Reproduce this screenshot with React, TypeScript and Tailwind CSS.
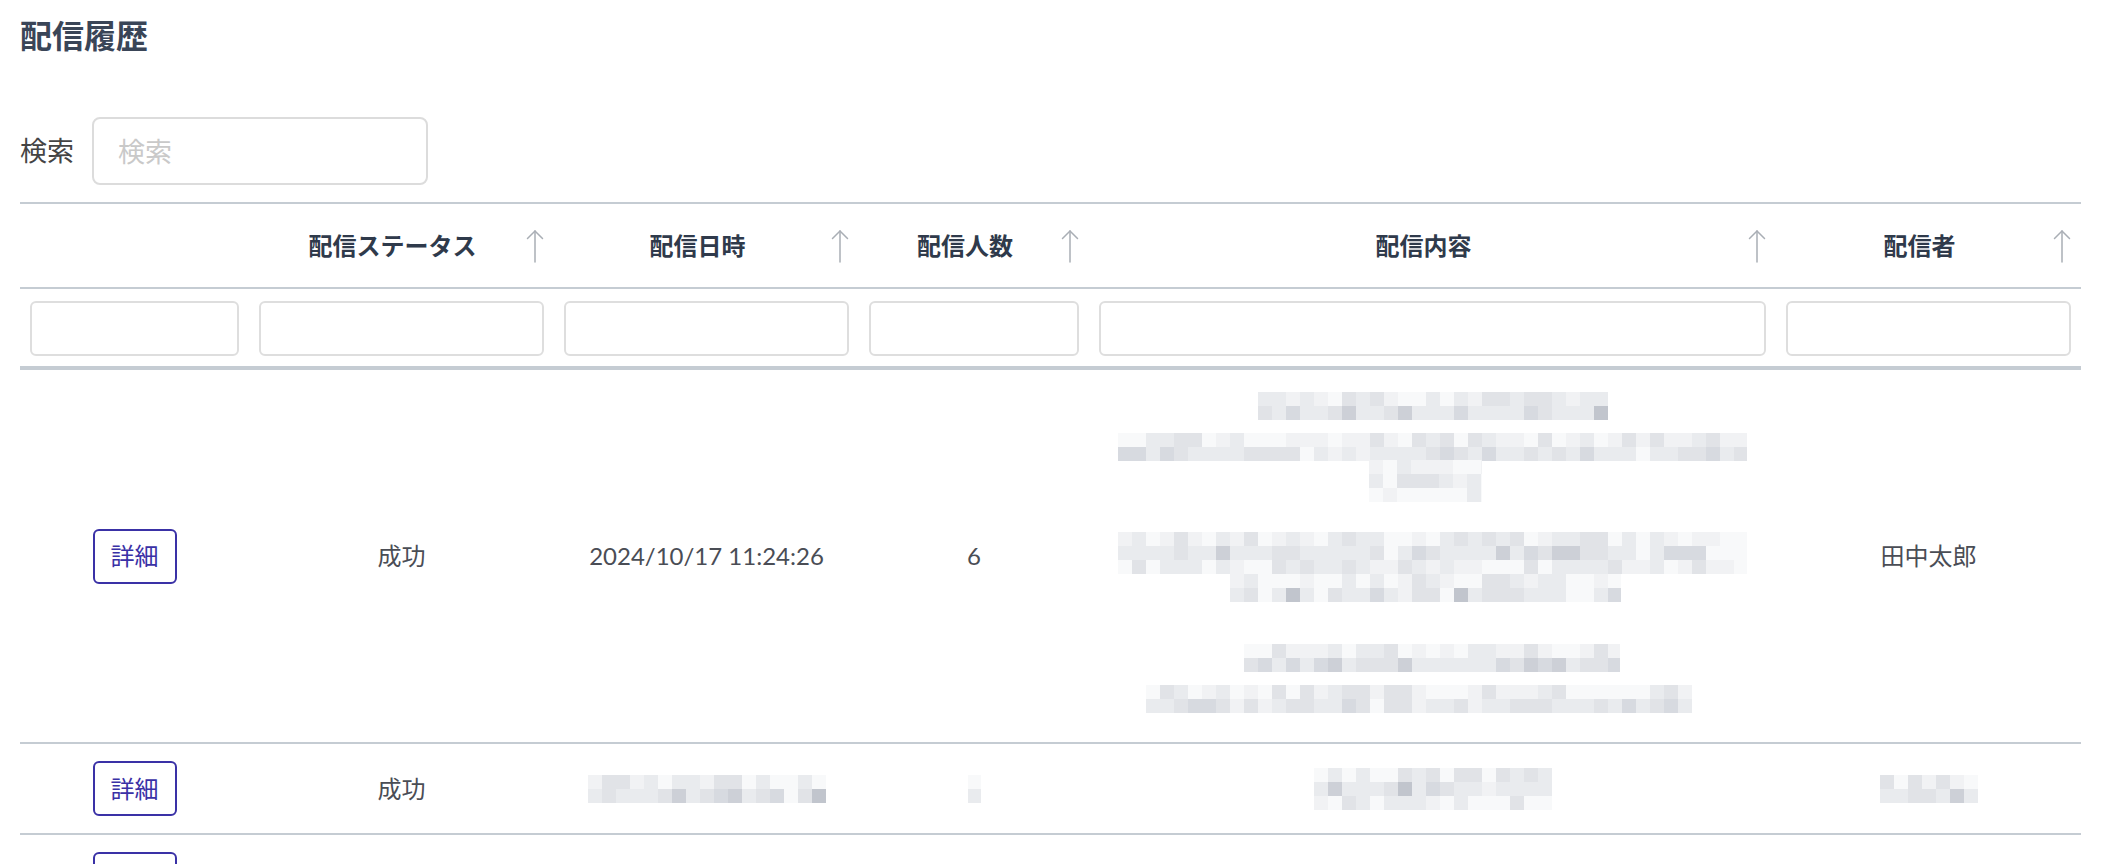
import React from "react";

function rng(seed: number) {
  let a = seed >>> 0;
  return () => {
    a = (a + 0x6d2b79f5) | 0;
    let t = Math.imul(a ^ (a >>> 15), 1 | a);
    t = (t + Math.imul(t ^ (t >>> 7), 61 | t)) ^ t;
    return ((t ^ (t >>> 14)) >>> 0) / 4294967296;
  };
}

const PAL = ["#f8f9fa", "#f1f2f4", "#e9ebee", "#e1e3e7", "#d7dae0", "#cdd0d7", "#c1c5cd"];

type Line = { x: number; y: number; w: number; rows: number; seed: number };

function Mosaic({ width, height, lines }: { width: number; height: number; lines: Line[] }) {
  const cell = 14;
  const rects: React.ReactElement[] = [];
  lines.forEach((ln, li) => {
    const r = rng(ln.seed);
    const cols = Math.ceil(ln.w / cell);
    for (let c = 0; c < cols; c++) {
      const gap = r() < 0.08;
      for (let row = 0; row < ln.rows; row++) {
        const core = row === 1 || (ln.rows === 1 && row === 0);
        let idx: number;
        if (gap) idx = Math.floor(r() * 2);
        else if (core) idx = 2 + Math.floor(r() * r() * 5);
        else idx = Math.floor(r() * 4);
        const w = Math.min(cell, ln.w - c * cell);
        rects.push(
          <rect
            key={`${li}-${c}-${row}`}
            x={ln.x + c * cell}
            y={ln.y + row * cell}
            width={w}
            height={cell}
            fill={PAL[idx]}
          />
        );
      }
    }
  });
  return (
    <svg width={width} height={height} viewBox={`0 0 ${width} ${height}`} shapeRendering="crispEdges" className="block">
      {rects}
    </svg>
  );
}

function SortArrow() {
  return (
    <svg width="18" height="34" viewBox="0 0 18 34" className="shrink-0" fill="none" stroke="#a9aeb5" strokeWidth="1.5" strokeLinecap="round">
      <path d="M9 33V2" />
      <path d="M1.5 9.5L9 2l7.5 7.5" />
    </svg>
  );
}

const GRID = "grid grid-cols-[229px_305px_305px_230px_687px_305px]";

function HeadCell({ label }: { label: string }) {
  return (
    <div className="flex items-center px-[10px]">
      <div className="flex-1 text-center text-[24px] font-bold text-[#2f3a4b]">{label}</div>
      <SortArrow />
    </div>
  );
}

function DetailButton({ label = "詳細" }: { label?: string }) {
  return (
    <button className="w-[84px] h-[55px] rounded-[6px] border-2 border-[#3a31a6] bg-white text-[24px] text-[#3a31a6] leading-none">
      {label}
    </button>
  );
}

export default function App() {
  return (
    <div className="min-h-screen bg-white pl-[20px] pt-[12px] text-[#4a4d55]" style={{ fontFamily: 'Lato, "Noto Sans CJK JP", sans-serif' }}>
      <h1 className="h-[48px] leading-[48px] text-[32px] font-bold text-[#3a4557]">配信履歴</h1>

      <div className="mt-[57px] flex items-center h-[68px]">
        <span className="text-[27px] text-[#444]">検索</span>
        <input
          placeholder="検索"
          className="ml-[18px] w-[336px] h-[68px] rounded-[8px] border-2 border-[#dcdcdc] px-[24px] text-[27px] placeholder:text-[#c9c9c9] outline-none"
        />
      </div>

      <div className="mt-[17px] w-[2061px] border-t-2 border-[#c5ccd3]">
        <div className={`${GRID} h-[85px] border-b-2 border-[#c5ccd3]`}>
          <div />
          <HeadCell label="配信ステータス" />
          <HeadCell label="配信日時" />
          <HeadCell label="配信人数" />
          <HeadCell label="配信内容" />
          <HeadCell label="配信者" />
        </div>

        <div className={`${GRID} pt-[12px] pb-[10px] border-b-4 border-[#c5ccd3]`}>
          {[0, 1, 2, 3, 4, 5].map((i) => (
            <div key={i} className="px-[10px]">
              <input className="w-full h-[55px] rounded-[6px] border-2 border-[#dedede] outline-none" />
            </div>
          ))}
        </div>

        <div className={`${GRID} items-center border-b-2 border-[#c5ccd3] text-[24px]`}>
          <div className="flex justify-center">
            <DetailButton />
          </div>
          <div className="text-center">成功</div>
          <div className="text-center">2024/10/17 11:24:26</div>
          <div className="text-center">6</div>
          <div className="flex justify-center pt-[22px] pb-[28px]">
            <Mosaic
              width={630}
              height={322}
              lines={[
                { x: 140, y: 0, w: 350, rows: 2, seed: 11 },
                { x: 0, y: 41, w: 629, rows: 2, seed: 12 },
                { x: 251, y: 68, w: 113, rows: 3, seed: 13 },
                { x: 0, y: 140, w: 629, rows: 3, seed: 14 },
                { x: 112, y: 182, w: 391, rows: 2, seed: 15 },
                { x: 126, y: 252, w: 376, rows: 2, seed: 16 },
                { x: 28, y: 293, w: 546, rows: 2, seed: 17 },
              ]}
            />
          </div>
          <div className="text-center">田中太郎</div>
        </div>

        <div className={`${GRID} items-center h-[91px] border-b-2 border-[#c5ccd3] text-[24px]`}>
          <div className="flex justify-center">
            <DetailButton />
          </div>
          <div className="text-center">成功</div>
          <div className="flex justify-center">
            <Mosaic width={238} height={28} lines={[{ x: 0, y: 0, w: 238, rows: 2, seed: 21 }]} />
          </div>
          <div className="flex justify-center">
            <Mosaic width={13} height={28} lines={[{ x: 0, y: 0, w: 13, rows: 2, seed: 22 }]} />
          </div>
          <div className="flex justify-center">
            <Mosaic width={238} height={42} lines={[{ x: 0, y: 0, w: 238, rows: 3, seed: 23 }]} />
          </div>
          <div className="flex justify-center">
            <Mosaic width={98} height={28} lines={[{ x: 0, y: 0, w: 98, rows: 2, seed: 24 }]} />
          </div>
        </div>

        <div className={`${GRID} items-center h-[91px] border-b-2 border-[#c5ccd3] text-[24px]`}>
          <div className="flex justify-center">
            <DetailButton label="" />
          </div>
          <div />
          <div />
          <div />
          <div />
          <div />
        </div>
      </div>
    </div>
  );
}
